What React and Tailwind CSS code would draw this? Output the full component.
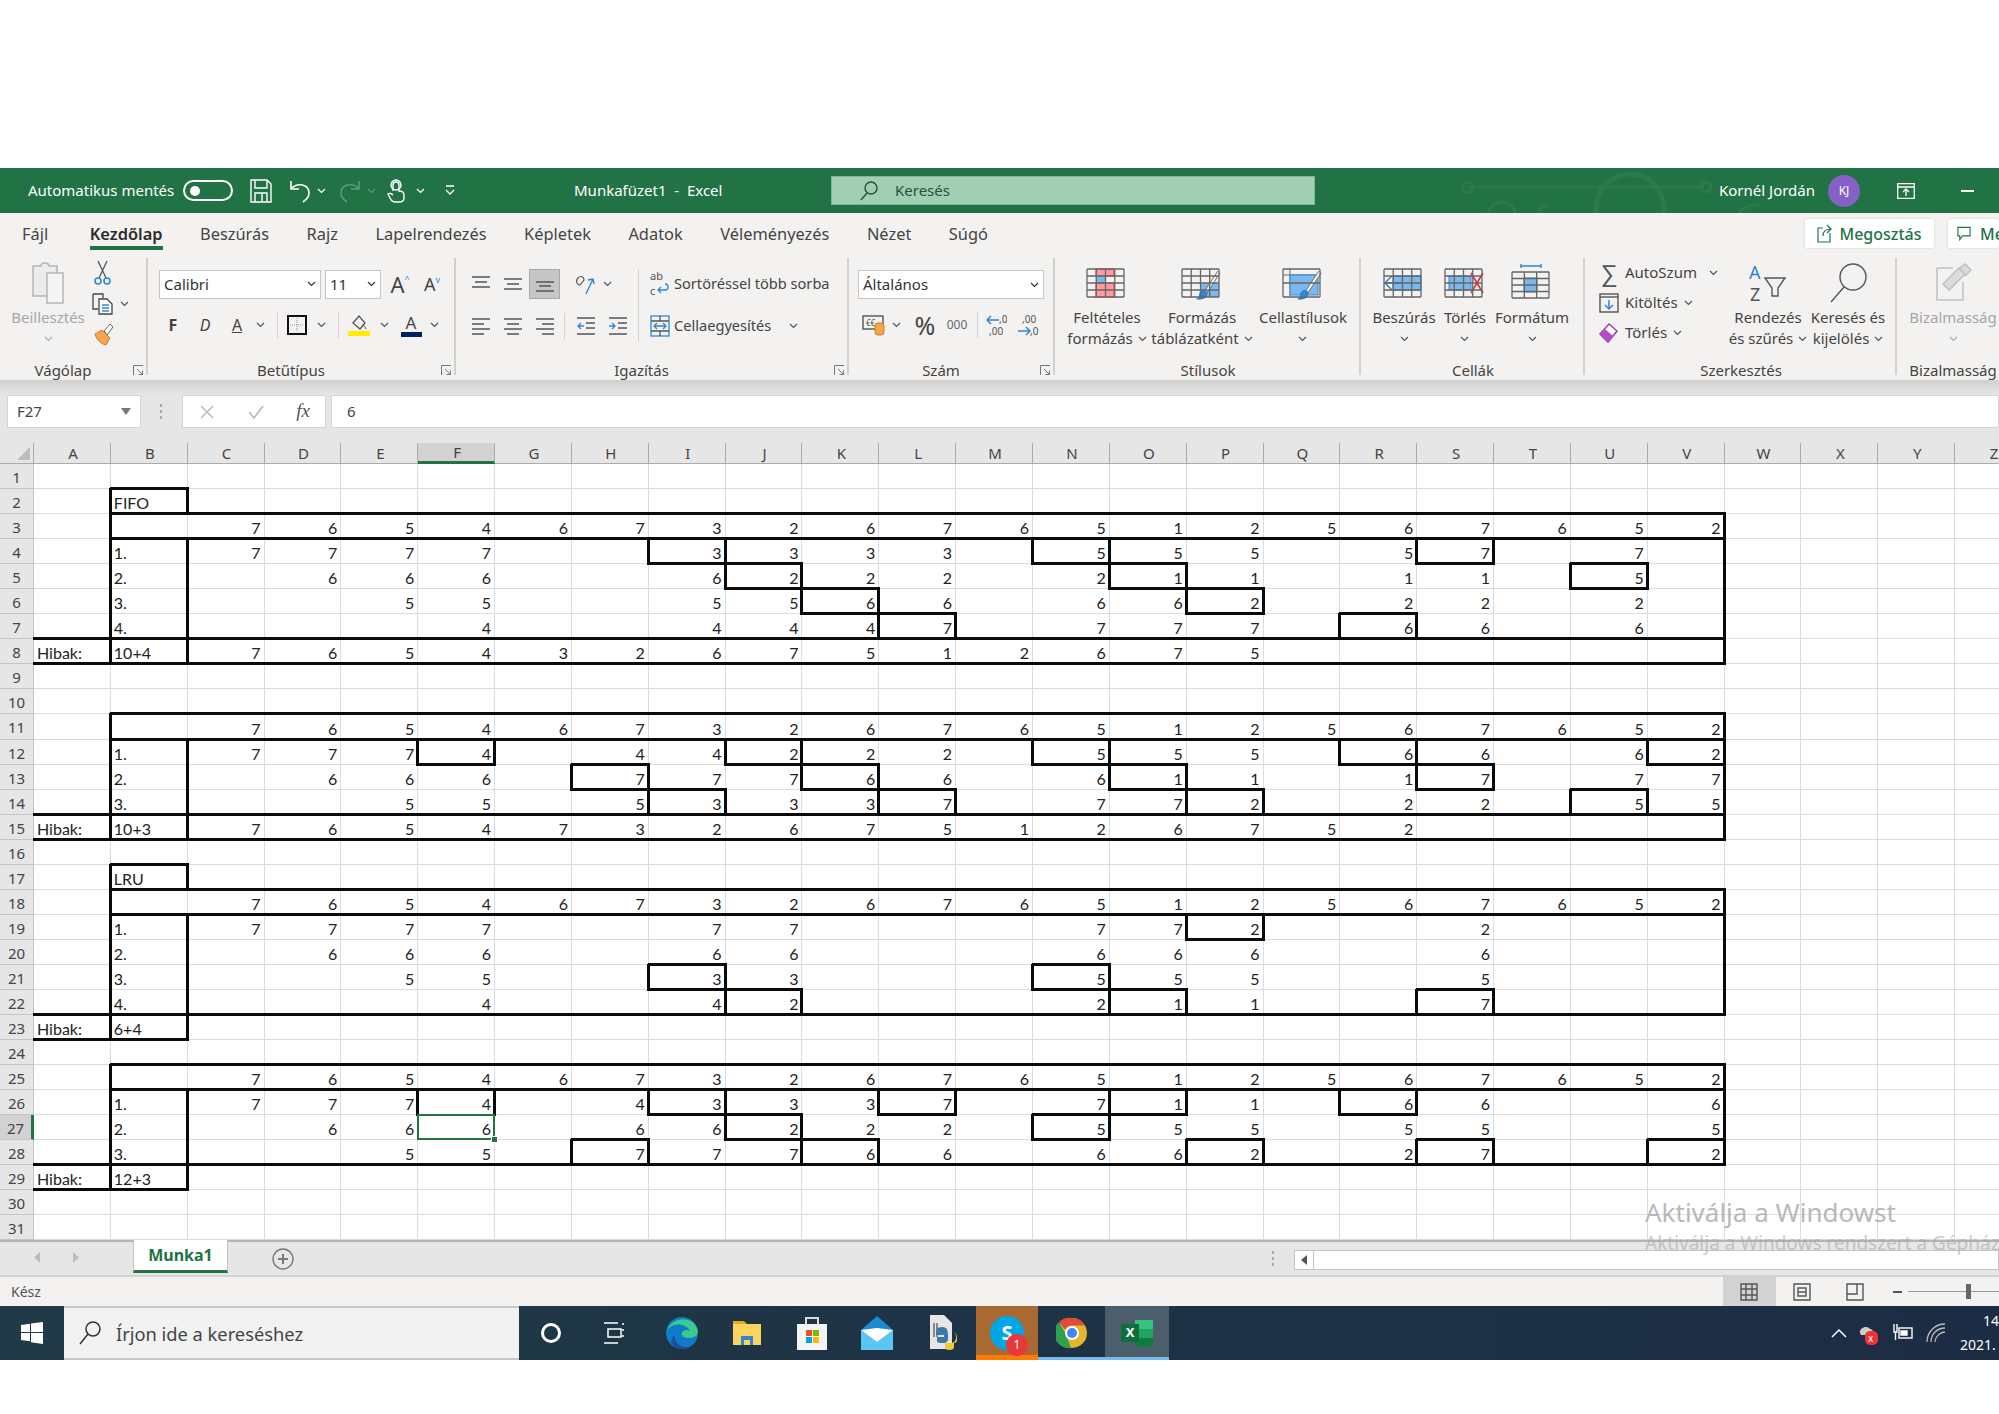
import { Fragment } from "react";

const SEQ = "76546732676512567652";
const COLS = "ABCDEFGHIJKLMNOPQRSTUVWXYZ".split("");

// Cell contents, one entry per sheet row. "b" goes in column B, "v" starts in column C.
const ROWS = {
  2: { b: "FIFO" },
  3: { v: SEQ },
  4: { b: "1.", v: "7777  3333 555 57 7 " },
  5: { b: "2.", v: " 666  6222 211 11 5 " },
  6: { b: "3.", v: "  55  5566 662 22 2 " },
  7: { b: "4.", v: "   4  4447 777 66 6 " },
  8: { a: "Hibak:", b: "10+4", v: "76543267512675" },
  11: { v: SEQ },
  12: { b: "1.", v: "7774 44222 555 66 62" },
  13: { b: "2.", v: " 666 77766 611 17 77" },
  14: { b: "3.", v: "  55 53337 772 22 55" },
  15: { a: "Hibak:", b: "10+3", v: "7654732675126752" },
  17: { b: "LRU" },
  18: { v: SEQ },
  19: { b: "1.", v: "7777  77   772  2" },
  20: { b: "2.", v: " 666  66   666  6" },
  21: { b: "3.", v: "  55  33   555  5" },
  22: { b: "4.", v: "   4  42   211  7" },
  23: { a: "Hibak:", b: "6+4" },
  25: { v: SEQ },
  26: { b: "1.", v: "7774 43337 711 66  6" },
  27: { b: "2.", v: " 666 66222 555 55  5" },
  28: { b: "3.", v: "  55 77766 662 27  2" },
  29: { a: "Hibak:", b: "12+3" },
};

// Thick border edges: h = bottom of a cell, v = right of a cell.
const EDGES = new Set();
const hLine = (r, from, to) => {
  for (let c = from; c <= to; c++) EDGES.add(`h${r}-${c}`);
};
const vLine = (c, from, to) => {
  for (let r = from; r <= to; r++) EDGES.add(`v${r}-${c}`);
};
const box = (name, r, skipBottom) => {
  const c = COLS.indexOf(name);
  hLine(r - 1, c, c);
  if (!skipBottom) hLine(r, c, c);
  vLine(c - 1, r, r);
  vLine(c, r, r);
};

// FIFO
hLine(1, 1, 1); vLine(0, 2, 8); vLine(1, 2, 2); vLine(1, 4, 8);
hLine(2, 1, 21); hLine(3, 1, 21); hLine(7, 0, 21); hLine(8, 0, 21); vLine(21, 3, 8);
[["I", 4], ["J", 5], ["K", 6], ["L", 7], ["N", 4], ["O", 5], ["P", 6], ["R", 7], ["S", 4], ["U", 5]].forEach(([c, r]) => box(c, r));
// second FIFO
hLine(10, 1, 21); hLine(11, 1, 21); hLine(14, 0, 21); hLine(15, 0, 21); vLine(0, 11, 15); vLine(1, 12, 15); vLine(21, 11, 15);
[["F", 12], ["J", 12], ["N", 12], ["R", 12], ["V", 12], ["H", 13], ["K", 13], ["O", 13], ["S", 13], ["I", 14], ["L", 14], ["P", 14], ["U", 14]].forEach(([c, r]) => box(c, r));
// LRU
hLine(16, 1, 1); vLine(0, 17, 23); vLine(1, 17, 17); vLine(1, 19, 23);
hLine(17, 1, 21); hLine(18, 1, 21); hLine(22, 0, 21); hLine(23, 0, 1); vLine(21, 18, 22);
[["P", 19], ["I", 21], ["N", 21], ["J", 22], ["O", 22], ["S", 22]].forEach(([c, r]) => box(c, r));
// second LRU
hLine(24, 1, 21); hLine(25, 1, 21); hLine(28, 0, 21); hLine(29, 0, 1); vLine(0, 25, 29); vLine(1, 26, 29); vLine(21, 25, 28);
[["I", 26], ["L", 26], ["O", 26], ["R", 26], ["J", 27], ["N", 27], ["H", 28], ["K", 28], ["P", 28], ["S", 28], ["V", 28]].forEach(([c, r]) => box(c, r));
box("F", 26, true);

function cellValue(r, c) {
  const row = ROWS[r];
  if (!row) return null;
  if (c === 0) return row.a;
  if (c === 1) return row.b;
  const ch = row.v?.[c - 2];
  return ch && ch !== " " ? ch : null;
}

function Chev({ c = "#555" }) {
  return (
    <svg width="9" height="6" viewBox="0 0 9 6" fill="none">
      <path d="M1 1l3.5 3.5L8 1" stroke={c} strokeWidth="1.2" />
    </svg>
  );
}

function Launcher() {
  return (
    <svg width="11" height="11" viewBox="0 0 11 11" fill="none" stroke="#777">
      <path d="M.5 10V.5H10" />
      <path d="M4 4l5.5 5.5M9.5 5.5v4h-4" />
    </svg>
  );
}

function GridIcon({ children, cols = 4, rows = 4, w = 37, h = 28, x = 1, y = 6 }) {
  const lines = [];
  for (let i = 0; i <= cols; i++) lines.push(`M${x + (w / cols) * i} ${y}v${h}`);
  for (let i = 0; i <= rows; i++) lines.push(`M${x} ${y + (h / rows) * i}h${w}`);
  return (
    <svg width="42" height="40" viewBox="0 0 42 40" fill="none">
      {children}
      <path d={lines.join("")} stroke="#666" strokeWidth="1.3" />
    </svg>
  );
}

function Brush() {
  return (
    <g>
      <path d="M38 9L24 30" stroke="#777" strokeWidth="4" />
      <path d="M38 9L24 30" stroke="#fff" strokeWidth="2" />
      <path d="M24 27c4 2 3 6 0 8s-7 2-9 1c2-1 3-2 3-4s3-6 6-5z" fill="#2f86d4" />
    </g>
  );
}

function BigButton({ icon, lines, muted, chevron }) {
  const tone = muted ? "text-[#a6a6a6]" : "text-[#444]";
  return (
    <div className={`flex flex-col items-center text-[15px] leading-[21px] whitespace-nowrap ${tone}`}>
      <div className="flex h-[49px] items-center">{icon}</div>
      <div>{lines[0]}</div>
      <div className="flex h-[21px] items-center gap-[5px]">
        {lines[1]}
        {chevron !== false && <Chev c={muted ? "#aaa" : "#555"} />}
      </div>
    </div>
  );
}

function Group({ label, launcher, className, children, last }) {
  return (
    <div className={`relative flex shrink-0 flex-col ${className}`}>
      {!last && <span className="absolute right-0 top-0 h-[117px] w-[2px] bg-[#d2d0ce]" />}
      <div className="h-[102px]">{children}</div>
      <div className={`relative flex h-[20px] items-center justify-center text-[15px] text-[#444] ${launcher ? "pr-[22px]" : ""}`}>
        {label}
        {launcher && (
          <span className="absolute right-[4px] top-[5px]">
            <Launcher />
          </span>
        )}
      </div>
    </div>
  );
}

function Lines({ d }) {
  return (
    <svg width="20" height="20" viewBox="0 0 20 20" fill="none">
      <path d={d} stroke="#555" strokeWidth="1.4" />
    </svg>
  );
}

function Slot({ className, children }) {
  return <div className={`flex shrink-0 items-center justify-center ${className}`}>{children}</div>;
}

function Sep() {
  return <div className="h-[26px] w-px bg-[#d2d0ce]" />;
}

function Select({ className, text, textColor = "text-[#333]" }) {
  return (
    <div className={`flex h-[29px] items-center justify-between border border-[#c8c6c4] bg-white pl-[4px] pr-[4px] text-[15px] ${textColor} ${className}`}>
      {text}
      <Chev c="#333" />
    </div>
  );
}

function TitleBar() {
  return (
    <div className="relative flex h-[45px] shrink-0 items-center bg-[#217346] text-[15px] text-white">
      <svg className="absolute left-[1440px] top-0" width="330" height="45" viewBox="0 0 330 45" fill="none" stroke="#2a7a4d" strokeWidth="3">
        <path d="M28 19h236" />
        <circle cx="28" cy="19" r="5" />
        <circle cx="266" cy="19" r="5" />
        <circle cx="62" cy="48" r="14" />
        <path d="M100 45c0-8 6-8 8-6" />
        <circle cx="190" cy="40" r="34" strokeWidth="5" />
        <path d="M300 45c2-6 10-8 20-8" />
      </svg>
      <div className="relative flex w-[574px] shrink-0 items-center">
        <span className="ml-[28px] w-[155px] whitespace-nowrap">Automatikus mentés</span>
        <div className="flex h-[21px] w-[50px] items-center rounded-full border-2 border-white pl-[5px]">
          <div className="size-[10px] rounded-full bg-white" />
        </div>
        <svg className="ml-[17px]" width="22" height="24" viewBox="0 0 22 24" fill="none" stroke="#fff" strokeWidth="1.4">
          <path d="M1 1h16l4 4v18H1zM5 1v8h12V1M5 23v-9h12v9M12 14v9" />
        </svg>
        <svg className="ml-[18px]" width="22" height="24" viewBox="0 0 22 24" fill="none" stroke="#fff" strokeWidth="1.6">
          <path d="M1 2v8h8M1 10c6-7 18-5 18 4 0 4-3 7-6 9" />
        </svg>
        <Slot className="ml-[2px] w-[14px]"><Chev c="#fff" /></Slot>
        <svg className="ml-[10px]" width="22" height="24" viewBox="0 0 22 24" fill="none" stroke="#5c9a78" strokeWidth="1.6">
          <path d="M21 2v8h-8M21 10c-6-7-18-5-18 4 0 4 3 7 6 9" />
        </svg>
        <Slot className="ml-[5px] w-[13px]"><Chev c="#5c9a78" /></Slot>
        <svg className="ml-[9px]" width="18" height="24" viewBox="0 0 18 24" fill="none" stroke="#fff" strokeWidth="1.4">
          <path d="M6 12V6a3 3 0 016 0v6c3 0 5 1 5 4v3c0 3-2 4-5 4H8c-3 0-4-2-6-6l-1-2c1-1 3-1 5 1" />
          <circle cx="9" cy="6" r="5" />
        </svg>
        <Slot className="ml-[8px] w-[14px]"><Chev c="#fff" /></Slot>
        <svg className="ml-[18px]" width="10" height="14" viewBox="0 0 10 14" fill="none" stroke="#fff" strokeWidth="1.3">
          <path d="M1 2h8M1 6l4 4 4-4" />
        </svg>
      </div>
      <div className="relative w-[257px] shrink-0 whitespace-nowrap">Munkafüzet1&nbsp; - &nbsp;Excel</div>
      <div className="relative flex h-[29px] w-[484px] shrink-0 items-center border border-[#7fb796] bg-[#a2ceb4] pl-[26px] text-[#24513a]">
        <svg width="22" height="22" viewBox="0 0 22 22" fill="none" stroke="#24513a" strokeWidth="1.4">
          <circle cx="13" cy="8" r="6" />
          <path d="M9 13l-6 7" />
        </svg>
        <span className="ml-[15px]">Keresés</span>
      </div>
      <div className="relative flex flex-1 items-center">
        <span className="ml-[404px] w-[109px] whitespace-nowrap">Kornél Jordán</span>
        <div className="flex size-[32px] items-center justify-center rounded-full bg-[#8661c5] text-[12px]">KJ</div>
        <svg className="ml-[37px]" width="18" height="16" viewBox="0 0 18 16" fill="none" stroke="#fff" strokeWidth="1.3">
          <path d="M.7.7h16.6v14.6H.7zM1 4h16M9 13V7M6 9l3-3 3 3" />
        </svg>
        <div className="ml-[46px] h-[2px] w-[13px] bg-white" />
      </div>
    </div>
  );
}

const TABS = ["Fájl", "Kezdőlap", "Beszúrás", "Rajz", "Lapelrendezés", "Képletek", "Adatok", "Véleményezés", "Nézet", "Súgó"];

function TabRow() {
  return (
    <div className="flex h-[45px] shrink-0 items-start">
      <div className="flex gap-[37.5px] pl-[22px] text-[16.4px] text-[#444]">
        {TABS.map((t) => (
          <div key={t} className={`flex h-[37px] items-center whitespace-nowrap ${t === "Kezdőlap" ? "ml-[4px] border-b-[4px] border-[#217346] pt-[9px] font-semibold text-[#2b2b2b]" : "pt-[5px]"}`}>
            {t}
          </div>
        ))}
      </div>
      <div className="ml-auto flex gap-[14px]">
        <div className="mt-[6px] flex h-[29px] w-[129px] items-center justify-center gap-[6px] rounded-[2px] bg-white text-[16px] font-medium text-[#217346] shadow-[0_0_2px_#c8c6c4]">
          <svg width="16" height="19" viewBox="0 0 16 19" fill="none" stroke="#217346" strokeWidth="1.2">
            <path d="M6 4H1v14h12V9M6 12c0-5 3-7 8-7M10 1l4 4-4 4" />
          </svg>
          Megosztás
        </div>
        <div className="mt-[6px] flex h-[29px] w-[51px] items-center gap-[9px] overflow-hidden rounded-[2px] bg-white pl-[9px] text-[16px] font-medium text-[#217346] shadow-[0_0_2px_#c8c6c4]">
          <svg className="shrink-0" width="14" height="15" viewBox="0 0 15 15" fill="none" stroke="#217346" strokeWidth="1.2">
            <path d="M1 1h13v9H6l-3 4v-4H1z" />
          </svg>
          Megjegyzések
        </div>
      </div>
    </div>
  );
}

function Clipboard() {
  return (
    <Group label="Vágólap" launcher className="w-[148px]">
      <div className="flex pl-[6px]">
        <div className="w-[84px]">
          <BigButton
            muted
            lines={["Beillesztés", ""]}
            icon={
              <svg width="42" height="44" viewBox="0 0 42 44" fill="none" stroke="#b5b5b5" strokeWidth="1.5">
                <path d="M6 5h8c0-4 8-4 8 0h8v30H6z" fill="#ececec" />
                <path d="M20 12h16v30H20z" fill="#f5f5f5" />
              </svg>
            }
          />
        </div>
        <div className="flex flex-col items-start pl-[2px] pt-[2px]">
          <svg width="22" height="26" viewBox="0 0 22 26" fill="none">
            <path d="M6 1l8 17M15 1L7 18" stroke="#555" strokeWidth="1.3" />
            <circle cx="6" cy="21" r="3" stroke="#2f86d4" strokeWidth="1.6" />
            <circle cx="15" cy="21" r="3" stroke="#2f86d4" strokeWidth="1.6" />
          </svg>
          <div className="mt-[7px] flex items-center gap-[6px]">
            <svg width="22" height="22" viewBox="0 0 22 22" fill="none" stroke="#444" strokeWidth="1.3">
              <path d="M1 1h10v4M1 1v15h5" />
              <path d="M7 6h8l5 5v10H7z" fill="#fff" />
              <path d="M10 12h7M10 15h7M10 18h7" stroke="#2f86d4" />
            </svg>
            <Chev />
          </div>
          <svg className="mt-[7px]" width="24" height="24" viewBox="0 0 24 24" fill="none">
            <path d="M3 12l7-4 8 8-4 7c-5-1-10-6-11-11z" fill="#f3a64c" stroke="#d9752a" />
            <path d="M12 9l6-7 3 3-6 8z" fill="#fff" stroke="#666" />
          </svg>
        </div>
      </div>
    </Group>
  );
}

function FontGroup() {
  return (
    <Group label="Betűtípus" launcher className="w-[308px]">
      <div className="flex h-[50px] items-center pl-[11px] pt-[2px]">
        <Select className="w-[162px]" text="Calibri" />
        <Select className="ml-[4px] w-[56px]" text="11" />
        <Slot className="ml-[3px] w-[32px] text-[22px] text-[#444]">A<span className="mb-[10px] text-[9px] text-[#2f86d4]">^</span></Slot>
        <Slot className="w-[32px] text-[18px] text-[#444]">A<span className="mb-[8px] text-[9px] text-[#2f86d4]">v</span></Slot>
      </div>
      <div className="flex h-[34px] items-center pl-[11px] text-[#444]">
        <Slot className="w-[28px] text-[16px] font-bold">F</Slot>
        <Slot className="w-[36px] text-[16px] italic">D</Slot>
        <Slot className="w-[28px] text-[16px] underline">A</Slot>
        <Slot className="w-[18px]"><Chev /></Slot>
        <Slot className="w-[16px]"><Sep /></Slot>
        <Slot className="w-[24px]">
          <svg width="20" height="20" viewBox="0 0 20 20" fill="none">
            <path d="M10 3v14M3 10h14" stroke="#999" strokeDasharray="1 1" />
            <rect x="1" y="1" width="18" height="18" stroke="#111" strokeWidth="2" />
          </svg>
        </Slot>
        <Slot className="w-[24px]"><Chev /></Slot>
        <Slot className="w-[10px]"><Sep /></Slot>
        <Slot className="w-[32px]">
          <svg width="22" height="24" viewBox="0 0 22 24" fill="none">
            <path d="M5 10l6-7 6 7-5 6z" stroke="#555" strokeWidth="1.3" />
            <path d="M14 12c2 1 4 2 4 4" stroke="#555" />
            <rect y="18" width="22" height="5" fill="#ffee00" />
          </svg>
        </Slot>
        <Slot className="w-[18px]"><Chev /></Slot>
        <Slot className="w-[36px]">
          <div className="flex flex-col items-center text-[17px] leading-[18px]">
            A
            <div className="h-[5px] w-[21px] bg-[#002060]" />
          </div>
        </Slot>
        <Slot className="w-[10px]"><Chev /></Slot>
      </div>
    </Group>
  );
}

function AlignGroup() {
  return (
    <Group label="Igazítás" launcher className="w-[393px]">
      <div className="flex pt-[11px]">
        <div className="flex w-[183px] flex-col border-r border-[#d2d0ce]">
          <div className="flex h-[30px] items-center pl-[9px]">
            <Slot className="w-[32px]"><Lines d="M1 3h18M4 8h12M1 13h18" /></Slot>
            <Slot className="w-[32px]"><Lines d="M1 5h18M4 10h12M1 15h18" /></Slot>
            <Slot className="h-[30px] w-[31px] border border-[#aaa] bg-[#c6c6c6]"><Lines d="M1 8h18M4 12h12M1 17h18" /></Slot>
            <Slot className="ml-[10px] w-[32px]">
              <svg width="24" height="24" viewBox="0 0 24 24" fill="none" stroke="#555" strokeWidth="1.2">
                <path d="M4 6c3-3 6-1 6 2l-4 5c-3 0-5-4-2-7z" />
                <path d="M19 7L12 22M19 7l-5 1M19 7l1 5" stroke="#2f86d4" strokeWidth="1.4" />
              </svg>
            </Slot>
            <Slot className="w-[11px]"><Chev /></Slot>
          </div>
          <div className="mt-[12px] flex h-[30px] items-center pl-[9px]">
            <Slot className="w-[32px]"><Lines d="M1 3h18M1 8h12M1 13h18M1 18h12" /></Slot>
            <Slot className="w-[32px]"><Lines d="M1 3h18M4 8h12M1 13h18M4 18h12" /></Slot>
            <Slot className="w-[32px]"><Lines d="M1 3h18M7 8h12M1 13h18M7 18h12" /></Slot>
            <Slot className="w-[7px]"><Sep /></Slot>
            <Slot className="ml-[2px] w-[32px]">
              <svg width="20" height="20" viewBox="0 0 20 20" fill="none" stroke="#555" strokeWidth="1.3">
                <path d="M1 2h18M10 7h9M10 12h9M1 18h18" />
                <path d="M8 10H2M5 7l-3 3 3 3" stroke="#2f86d4" />
              </svg>
            </Slot>
            <Slot className="w-[32px]">
              <svg width="20" height="20" viewBox="0 0 20 20" fill="none" stroke="#555" strokeWidth="1.3">
                <path d="M1 2h18M10 7h9M10 12h9M1 18h18" />
                <path d="M1 10h6M4 7l3 3-3 3" stroke="#2f86d4" />
              </svg>
            </Slot>
          </div>
        </div>
        <div className="flex flex-col pl-[11px] text-[14.6px] text-[#444]">
          <div className="flex h-[30px] items-center gap-[4px] whitespace-nowrap">
            <svg width="20" height="28" viewBox="0 0 20 28" fill="none">
              <text x="0" y="10" fontSize="11" fill="#555" fontFamily="Noto Sans">ab</text>
              <text x="0" y="25" fontSize="11" fill="#555" fontFamily="Noto Sans">c</text>
              <path d="M15 14c4 0 4 6 0 6h-6M11 17l-3 3 3 3" stroke="#2f86d4" strokeWidth="1.3" />
            </svg>
            Sortöréssel több sorba
          </div>
          <div className="mt-[12px] flex h-[30px] items-center gap-[4px] whitespace-nowrap">
            <svg width="20" height="22" viewBox="0 0 20 22" fill="none" stroke="#2f86d4" strokeWidth="1.3">
              <rect x="1" y="1" width="18" height="20" />
              <path d="M1 6h18M1 16h18M10 1v5M10 16v5" stroke="#555" />
              <path d="M4 11h12M7 8l-3 3 3 3M13 8l3 3-3 3" />
            </svg>
            <span className="mr-[14px]">Cellaegyesítés</span>
            <Chev />
          </div>
        </div>
      </div>
    </Group>
  );
}

function NumberGroup() {
  return (
    <Group label="Szám" launcher className="w-[206px]">
      <div className="pl-[9px] pt-[12px]">
        <Select className="w-[186px]" text="Általános" />
        <div className="mt-[9px] flex h-[34px] items-center text-[#444]">
          <Slot className="w-[32px]">
            <svg width="24" height="22" viewBox="0 0 24 22" fill="none">
              <rect x="1" y="2" width="20" height="13" stroke="#555" strokeWidth="1.4" />
              <text x="4" y="12" fontSize="8" fill="#555" fontFamily="Noto Sans">€€</text>
              <rect x="13" y="9" width="9" height="12" rx="3" fill="#f3a64c" stroke="#d9752a" />
            </svg>
          </Slot>
          <Slot className="w-[12px]"><Chev /></Slot>
          <Slot className="ml-[6px] w-[34px] text-[25px] leading-none">%</Slot>
          <Slot className="w-[30px] text-[12px] text-[#666]">000</Slot>
          <Slot className="ml-[2px] w-[6px]"><Sep /></Slot>
          <Slot className="ml-[3px] w-[26px]">
            <svg width="22" height="24" viewBox="0 0 22 24" fill="none">
              <path d="M14 7H2M6 3L2 7l4 4" stroke="#2f86d4" strokeWidth="1.5" />
              <text x="14" y="10" fontSize="10" fill="#555" fontFamily="Noto Sans">,0</text>
              <text x="4" y="22" fontSize="10" fill="#555" fontFamily="Noto Sans">,00</text>
            </svg>
          </Slot>
          <Slot className="ml-[6px] w-[26px]">
            <svg width="22" height="24" viewBox="0 0 22 24" fill="none">
              <text x="5" y="10" fontSize="10" fill="#555" fontFamily="Noto Sans">,00</text>
              <path d="M1 18h12M9 14l4 4-4 4" stroke="#2f86d4" strokeWidth="1.5" />
              <text x="13" y="22" fontSize="10" fill="#555" fontFamily="Noto Sans">,0</text>
            </svg>
          </Slot>
        </div>
      </div>
    </Group>
  );
}

function StylesGroup() {
  return (
    <Group label="Stílusok" className="w-[306px]">
      <div className="flex pl-[5px]">
        <div className="flex w-[94px] justify-center">
          <BigButton
            lines={["Feltételes", "formázás"]}
            icon={
              <GridIcon>
                <rect x="10" y="6" width="18" height="7" fill="#ff9aa2" stroke="#e3313c" />
                <rect x="10" y="13" width="9" height="7" fill="#7ab8ee" />
                <rect x="10" y="20" width="18" height="14" fill="#ff9aa2" stroke="#e3313c" />
              </GridIcon>
            }
          />
        </div>
        <div className="flex w-[96px] justify-center">
          <BigButton
            lines={["Formázás", "táblázatként"]}
            icon={
              <GridIcon>
                <rect x="20" y="20" width="18" height="14" fill="#7ab8ee" />
                <Brush />
              </GridIcon>
            }
          />
        </div>
        <div className="flex w-[106px] justify-center">
          <BigButton
            lines={["Cellastílusok", ""]}
            icon={
              <GridIcon rows={2} cols={1}>
                <path d="M1 12h37M8 6v28" stroke="#666" />
                <rect x="8" y="12" width="28" height="20" fill="#7ab8ee" stroke="#2f86d4" />
                <Brush />
              </GridIcon>
            }
          />
        </div>
      </div>
    </Group>
  );
}

function CellsGroup() {
  return (
    <Group label="Cellák" className="w-[224px]">
      <div className="flex pl-[11px]">
        <div className="flex w-[64px] justify-center">
          <BigButton
            lines={["Beszúrás", ""]}
            icon={
              <GridIcon>
                <rect x="10" y="13" width="28" height="14" fill="#7ab8ee" stroke="#2f86d4" />
                <path d="M18 20H2M9 13l-7 7 7 7" stroke="#2f86d4" strokeWidth="1.6" fill="#fff" />
              </GridIcon>
            }
          />
        </div>
        <div className="flex w-[58px] justify-center">
          <BigButton
            lines={["Törlés", ""]}
            icon={
              <GridIcon>
                <rect x="5" y="13" width="22" height="14" fill="#7ab8ee" stroke="#2f86d4" />
                <path d="M27 10l12 20M39 10L27 30" stroke="#e3313c" strokeWidth="1.7" />
              </GridIcon>
            }
          />
        </div>
        <div className="flex w-[76px] justify-center">
          <BigButton
            lines={["Formátum", ""]}
            icon={
              <GridIcon y={9} h={26} cols={3}>
                <path d="M10 3h20M10 1v4M30 1v4" stroke="#2f86d4" strokeWidth="1.4" />
                <rect x="13" y="15" width="13" height="14" fill="#7ab8ee" stroke="#2f86d4" />
              </GridIcon>
            }
          />
        </div>
      </div>
    </Group>
  );
}

function EditGroup() {
  return (
    <Group label="Szerkesztés" className="w-[312px]">
      <div className="flex pl-[12px]">
        <div className="flex w-[133px] flex-col text-[15px] text-[#444]">
          <div className="flex h-[29px] items-center">
            <Slot className="w-[24px] text-[24px] font-light leading-none text-[#555]">∑</Slot>
            <span className="ml-[4px] w-[84px]">AutoSzum</span>
            <Chev />
          </div>
          <div className="mt-[1px] flex h-[29px] items-center">
            <Slot className="w-[24px]">
              <svg width="20" height="20" viewBox="0 0 20 20" fill="none">
                <rect x="1" y="1" width="18" height="18" stroke="#555" strokeWidth="1.4" />
                <path d="M1 4h18" stroke="#555" strokeWidth="1.4" />
                <path d="M10 7v9M6 12l4 4 4-4" stroke="#2f86d4" strokeWidth="1.5" />
              </svg>
            </Slot>
            <span className="ml-[4px] mr-[6px]">Kitöltés</span>
            <Chev />
          </div>
          <div className="mt-[1px] flex h-[29px] items-center">
            <Slot className="w-[24px]">
              <svg width="22" height="22" viewBox="0 0 22 22" fill="none">
                <path d="M2 12L11 2l8 7-9 11z" fill="#fff" stroke="#a33fb5" strokeWidth="1.6" />
                <path d="M2 12l5-5 8 7-5 6z" fill="#b34fc6" />
              </svg>
            </Slot>
            <span className="ml-[4px] mr-[6px]">Törlés</span>
            <Chev />
          </div>
        </div>
        <div className="flex w-[76px] justify-center">
          <BigButton
            lines={["Rendezés", "és szűrés"]}
            icon={
              <svg width="40" height="42" viewBox="0 0 40 42" fill="none">
                <text x="1" y="17" fontSize="18" fill="#2f86d4" fontFamily="Noto Sans">A</text>
                <text x="2" y="39" fontSize="18" fill="#555" fontFamily="Noto Sans">Z</text>
                <path d="M17 16h20l-7 10v8h-6v-8z" stroke="#555" strokeWidth="1.4" />
              </svg>
            }
          />
        </div>
        <div className="flex w-[84px] justify-center">
          <BigButton
            lines={["Keresés és", "kijelölés"]}
            icon={
              <svg width="40" height="42" viewBox="0 0 40 42" fill="none" stroke="#555" strokeWidth="1.4">
                <circle cx="25" cy="15" r="13" />
                <path d="M16 25L3 40" />
              </svg>
            }
          />
        </div>
      </div>
    </Group>
  );
}

function TrustGroup() {
  return (
    <Group label="Bizalmasság" last className="w-[112px]">
      <div className="flex justify-center">
        <BigButton
          muted
          lines={["Bizalmasság", ""]}
          icon={
            <svg width="40" height="42" viewBox="0 0 40 42" fill="none" stroke="#c2c2c2" strokeWidth="1.6">
              <path d="M4 6h16M4 6v32h26V20" />
              <path d="M10 22L26 6l6 6-16 16zM24 8l8-6 6 6-6 6" fill="#dcdcdc" />
            </svg>
          }
        />
      </div>
    </Group>
  );
}

function FormulaBar() {
  return (
    <div className="flex h-[48px] shrink-0 bg-[#e6e6e6] pb-[15px] text-[16px] text-[#444]">
      <div className="ml-[7px] flex w-[134px] items-center justify-between border border-[#d4d4d4] bg-white px-[9px] text-[15px]">
        F27
        <svg width="10" height="7" viewBox="0 0 10 7"><path d="M0 0h10L5 7z" fill="#777" /></svg>
      </div>
      <Slot className="w-[41px] text-[#999]">
        <svg width="3" height="16" viewBox="0 0 3 16" fill="#aaa"><rect y="0" width="2" height="3" /><rect y="6" width="2" height="3" /><rect y="12" width="2" height="3" /></svg>
      </Slot>
      <div className="flex w-[144px] items-center border border-[#d4d4d4] bg-white">
        <Slot className="ml-[11px] w-[26px]">
          <svg width="14" height="14" viewBox="0 0 14 14" stroke="#bcbcbc" strokeWidth="1.6"><path d="M1 1l12 12M13 1L1 13" /></svg>
        </Slot>
        <Slot className="ml-[23px] w-[26px]">
          <svg width="16" height="14" viewBox="0 0 16 14" stroke="#bcbcbc" strokeWidth="1.8" fill="none"><path d="M1 7l5 6L15 1" /></svg>
        </Slot>
        <Slot className="ml-[21px] w-[26px] font-['Liberation_Serif',serif] text-[19px] italic text-[#555]">fx</Slot>
      </div>
      <div className="ml-[5px] flex flex-1 items-center border border-[#d4d4d4] bg-white pl-[15px] text-[15px]">6</div>
    </div>
  );
}

function Sheet() {
  const rows = Array.from({ length: 31 }, (_, i) => i + 1);
  return (
    <div className="grid shrink-0 grid-cols-[34px_repeat(26,76.85px)] grid-rows-[21px_repeat(31,25.06px)] font-['Lato',sans-serif] text-[16px] leading-[18px] text-[#222]">
      <div className="relative border-r border-b border-[#ababab] bg-[#e6e6e6]">
        <svg className="absolute bottom-[3px] right-[3px]" width="13" height="13" viewBox="0 0 13 13"><path d="M13 0v13H0z" fill="#bdbdbd" /></svg>
      </div>
      {COLS.map((name) => (
        <div
          key={name}
          className={`flex items-center justify-center border-r pl-[2px] font-['Noto_Sans',sans-serif] text-[15px] text-[#444] ${
            name === "F"
              ? "border-b-[3px] border-r-[#ababab] border-b-[#217346] bg-[#d2d2d2]"
              : "border-b border-[#ababab] bg-[#e6e6e6]"
          }`}
        >
          {name}
        </div>
      ))}
      {rows.map((r) => (
        <Fragment key={r}>
          <div
            className={`flex items-center justify-center border-b pt-[2px] font-['Noto_Sans',sans-serif] text-[15px] text-[#444] ${
              r === 27
                ? "border-r-[3px] border-r-[#217346] border-b-[#c4c4c4] bg-[#d2d2d2]"
                : "border-r border-[#c4c4c4] bg-[#e6e6e6]"
            }`}
          >
            {r}
          </div>
          {COLS.map((_, c) => {
            const value = cellValue(r, c);
            const isText = c < 2;
            return (
              <div
                key={c}
                className={`relative flex items-end border-r border-b border-[#dcdcdc] bg-white pb-px ${isText ? "pl-[3px]" : "justify-end pr-[3px]"}`}
              >
                {value}
                {EDGES.has(`h${r}-${c}`) && <span className="absolute -bottom-[2px] -left-px -right-[2px] z-10 h-[3px] bg-[#0a0a0a]" />}
                {EDGES.has(`v${r}-${c}`) && <span className="absolute -bottom-[2px] -right-[2px] -top-px z-10 w-[3px] bg-[#0a0a0a]" />}
                {r === 27 && c === 5 && (
                  <span className="absolute -inset-px z-20 border-2 border-[#217346]">
                    <span className="absolute -bottom-[5px] -right-[5px] size-[7px] border border-white bg-[#217346]" />
                  </span>
                )}
              </div>
            );
          })}
        </Fragment>
      ))}
    </div>
  );
}

function SheetTabs() {
  return (
    <div className="flex h-[37px] shrink-0 border-t-2 border-b-2 border-t-[#b4b4b4] border-b-[#d4d4d4] bg-[#e6e6e6]">
      <div className="flex w-[133px] items-center pb-[2px]">
        <svg className="ml-[34px]" width="7" height="11" viewBox="0 0 7 11"><path d="M6 0v11L0 5.5z" fill="#bcbcbc" /></svg>
        <svg className="ml-[31px]" width="7" height="11" viewBox="0 0 7 11"><path d="M1 0v11l6-5.5z" fill="#bcbcbc" /></svg>
      </div>
      <div className="-mt-[2px] flex h-[33px] w-[95px] items-center justify-center border-x border-[#c4c4c4] border-b-[3px] border-b-[#217346] bg-white text-[16px] font-bold text-[#217346]">
        Munka1
      </div>
      <Slot className="ml-[44px] w-[22px]">
        <svg width="22" height="22" viewBox="0 0 22 22" fill="none" stroke="#777" strokeWidth="1.4">
          <circle cx="11" cy="11" r="10" />
          <path d="M11 6v10M6 11h10" strokeWidth="2" />
        </svg>
      </Slot>
      <Slot className="ml-[969px] w-[20px]">
        <svg width="3" height="16" viewBox="0 0 3 16" fill="#aaa"><rect y="0" width="2" height="3" /><rect y="6" width="2" height="3" /><rect y="12" width="2" height="3" /></svg>
      </Slot>
      <div className="ml-[11px] mt-[8px] flex h-[20px] flex-1 border border-[#c4c4c4] bg-white">
        <Slot className="w-[19px] border-r border-[#c4c4c4]">
          <svg width="6" height="10" viewBox="0 0 6 10"><path d="M6 0v10L0 5z" fill="#555" /></svg>
        </Slot>
      </div>
    </div>
  );
}

function StatusBar() {
  return (
    <div className="flex h-[29px] shrink-0 items-center bg-[#f3f2f1] pl-[11px] text-[14px] text-[#555]">
      Kész
      <Slot className="ml-[1682px] h-full w-[53px] bg-[#d2d2d2]">
        <svg width="18" height="18" viewBox="0 0 18 18" fill="none" stroke="#555" strokeWidth="1.4"><path d="M1 1h16v16H1zM1 6h16M1 12h16M6 1v16M12 1v16" /></svg>
      </Slot>
      <Slot className="w-[53px]">
        <svg width="18" height="18" viewBox="0 0 18 18" fill="none" stroke="#555" strokeWidth="1.4"><path d="M1 1h16v16H1zM5 5h8v8H5zM5 9h8" /></svg>
      </Slot>
      <Slot className="w-[53px]">
        <svg width="18" height="18" viewBox="0 0 18 18" fill="none" stroke="#555" strokeWidth="1.4"><path d="M1 1h16v16H1zM1 11h10V1" /></svg>
      </Slot>
      <div className="ml-[11px] h-[2px] w-[9px] bg-[#555]" />
      <div className="relative ml-[6px] h-px flex-1 bg-[#999]">
        <div className="absolute -top-[7px] left-[58px] h-[15px] w-[5px] bg-[#666]" />
      </div>
    </div>
  );
}

function Taskbar() {
  const icon = "flex h-full shrink-0 items-center justify-center";
  return (
    <div className="flex h-[54px] shrink-0 bg-linear-to-r from-[#203a47] to-[#1c2c44]">
      <div className={`${icon} w-[64px]`}>
        <svg width="22" height="22" viewBox="0 0 22 22" fill="#fff">
          <path d="M0 3l9-1.3V10H0zM10 1.500L22 0v10H10zM0 11h9v8.300L0 18zM10 11h12v11l-12-1.700z" />
        </svg>
      </div>
      <div className="flex w-[455px] shrink-0 items-center border-t-2 border-b-2 border-[#c8c8c8] bg-[#f2f2f2] pl-[13px] text-[18.3px] text-[#444]">
        <svg width="26" height="26" viewBox="0 0 26 26" fill="none" stroke="#333" strokeWidth="1.5">
          <circle cx="16" cy="9" r="7" />
          <path d="M11 14l-8 10" />
        </svg>
        <span className="ml-[13px]">Írjon ide a kereséshez</span>
      </div>
      <div className={`${icon} w-[64px]`}>
        <div className="size-[20px] rounded-full border-[3px] border-white" />
      </div>
      <div className={`${icon} w-[62px]`}>
        <svg width="22" height="24" viewBox="0 0 22 24" fill="none" stroke="#fff" strokeWidth="1.5">
          <path d="M1 2h14M5 8h13v8H5zM1 22h14M20 2v2M20 8v2M20 14v2" />
        </svg>
      </div>
      <div className={`${icon} ml-[4px] w-[65px]`}>
        <svg width="34" height="34" viewBox="0 0 34 34">
          <circle cx="17" cy="17" r="16" fill="#0f7cc8" />
          <path d="M2 15C5 2 26-2 32 12c3 8-3 10-9 10-5 0-7-3-6-5 1-3 5-4 8-2-3-8-19-9-23 0z" fill="#3ccb8f" />
          <path d="M9 18c0 8 6 14 14 13-5 4-14 2-17-5z" fill="#1b4f9c" />
        </svg>
      </div>
      <div className={`${icon} w-[65px]`}>
        <svg width="30" height="30" viewBox="0 0 30 30">
          <path d="M1 3h11l3 3h-14z" fill="#e8a91e" />
          <rect x="1" y="6" width="28" height="21" fill="#fad45f" />
          <path d="M9 27v-9h12v9h-3v-5h-6v5z" fill="#2f86d4" />
        </svg>
      </div>
      <div className={`${icon} w-[65px]`}>
        <svg width="30" height="36" viewBox="0 0 30 36">
          <path d="M9 9V3h12v6" fill="none" stroke="#ddd" strokeWidth="2" />
          <rect x="0" y="9" width="30" height="26" fill="#f4f4f4" />
          <rect x="9" y="15" width="6" height="6" fill="#f25022" />
          <rect x="16" y="15" width="6" height="6" fill="#7fba00" />
          <rect x="9" y="22" width="6" height="6" fill="#00a4ef" />
          <rect x="16" y="22" width="6" height="6" fill="#ffb900" />
        </svg>
      </div>
      <div className={`${icon} w-[66px]`}>
        <svg width="32" height="34" viewBox="0 0 32 34">
          <path d="M0 14L16 0l16 14v20H0z" fill="#1a8ad4" />
          <path d="M0 14l16 12 16-12v20H0z" fill="#5cc6f2" />
          <path d="M0 14l16 12 16-12-16-2z" fill="#ffffff" />
        </svg>
      </div>
      <div className={`${icon} w-[66px]`}>
        <svg width="30" height="36" viewBox="0 0 30 36">
          <path d="M2 0h14l8 8v26H2z" fill="#e6e6e6" />
          <path d="M6 8v14M9 8v14" stroke="#888" strokeWidth="2" />
          <path d="M14 12c-6 0-6 3-6 8h8v2h-7v4c0 2 4 2 6 2 4 0 5-2 5-4v-4c0-5-1-8-6-8z" fill="#3c78a8" />
          <path d="M22 16c5 0 6 2 6 6s-2 6-6 6h-5v6c5 2 9 1 9-2v-4c2 0 3-1 3-3 0-6-1-9-7-9z" fill="#f2cb3c" />
        </svg>
      </div>
      <div className={`${icon} w-[62px] border-b-[5px] border-[#ff7a00] bg-[#a86a30] pt-[5px]`}>
        <div className="relative">
          <div className="flex size-[34px] items-center justify-center rounded-full bg-[#00a6e8] text-[20px] font-bold text-white">S</div>
          <div className="absolute -bottom-[6px] -right-[4px] flex size-[22px] items-center justify-center rounded-full bg-[#e8383a] text-[12px] text-white">1</div>
        </div>
      </div>
      <div className={`${icon} w-[67px] border-b-[3px] border-[#76b9ed] pt-[3px]`}>
        <svg width="32" height="32" viewBox="0 0 32 32">
          <circle cx="16" cy="16" r="15" fill="#e2b72d" />
          <path d="M16 1a15 15 0 0113 7.500H16a8 8 0 00-7 4L3 5a15 15 0 0113-4z" fill="#de4a3c" />
          <path d="M3 5l6.500 11.500L15 31A15 15 0 013 5z" fill="#2da14f" />
          <circle cx="16" cy="16" r="7" fill="#fff" />
          <circle cx="16" cy="16" r="5" fill="#4285f4" />
        </svg>
      </div>
      <div className={`${icon} w-[64px] border-b-[3px] border-[#76b9ed] bg-[#4c5e6b] pt-[3px]`}>
        <div className="flex">
          <div className="z-10 mt-[4px] flex size-[18px] items-center justify-center bg-[#0f6f3c] text-[13px] font-bold text-white">X</div>
          <div className="-ml-[4px] flex h-[27px] w-[18px] flex-col">
            <div className="h-[9px] bg-[#33c481]" />
            <div className="h-[9px] bg-[#21a366]" />
            <div className="h-[9px] bg-[#107c41]" />
          </div>
        </div>
      </div>
      <div className="ml-[662px] flex items-center text-white">
        <svg width="16" height="10" viewBox="0 0 16 10" fill="none" stroke="#fff" strokeWidth="1.5"><path d="M1 9l7-7 7 7" /></svg>
        <svg className="ml-[10px]" width="22" height="24" viewBox="0 0 22 24">
          <path d="M3 12c-1-6 8-8 10-4 4 0 4 6 0 6H4z" fill="#ccc" />
          <rect x="8" y="10" width="13" height="14" rx="5" fill="#e33" />
          <text x="11" y="21" fontSize="10" fill="#fff" fontFamily="Noto Sans">x</text>
        </svg>
        <svg className="ml-[12px]" width="22" height="22" viewBox="0 0 22 22" fill="none" stroke="#fff" strokeWidth="1.4">
          <rect x="8" y="6" width="13" height="10" />
          <path d="M3 2v8h3V2M4.500 10v8" />
          <path d="M10 9h6v4h-6z" fill="#fff" />
        </svg>
        <svg className="ml-[13px]" width="20" height="20" viewBox="0 0 20 20" fill="none" stroke="#bbb" strokeWidth="1.3">
          <path d="M1 19C1 9 9 1 19 1M5 19C5 11 11 5 19 5M9 19c0-5 5-10 10-10" />
        </svg>
        <div className="ml-[14px] flex flex-col whitespace-nowrap text-[14px] leading-[24px]">
          <span className="ml-[23px]">14:22</span>
          <span>2021. 05. 08.</span>
        </div>
      </div>
    </div>
  );
}

export default function App() {
  return (
    <div className="relative h-[1414px] w-[1999px] overflow-hidden bg-white font-['Noto_Sans',sans-serif]">
      <div className="h-[168px]" />
      <div className="flex flex-col">
        <TitleBar />
        <div className="flex h-[167px] shrink-0 flex-col bg-[#f3f2f1]">
          <TabRow />
          <div className="flex">
            <Clipboard />
            <FontGroup />
            <AlignGroup />
            <NumberGroup />
            <StylesGroup />
            <CellsGroup />
            <EditGroup />
            <TrustGroup />
          </div>
        </div>
        <div className="h-[15px] shrink-0 bg-linear-to-b from-[#d0d0d0] to-[#e6e6e6]" />
        <FormulaBar />
        <Sheet />
        <SheetTabs />
        <StatusBar />
        <Taskbar />
      </div>
      {/* Windows activation watermark lies over the sheet */}
      <div className="pointer-events-none absolute left-[1645px] top-[1194px] z-30 whitespace-nowrap text-[#a8a8a8] opacity-80">
        <div className="text-[26px] leading-[36px]">Aktiválja a Windowst</div>
        <div className="text-[19px] leading-[26px] opacity-70">Aktiválja a Windows rendszert a Gépházban.</div>
      </div>
    </div>
  );
}
